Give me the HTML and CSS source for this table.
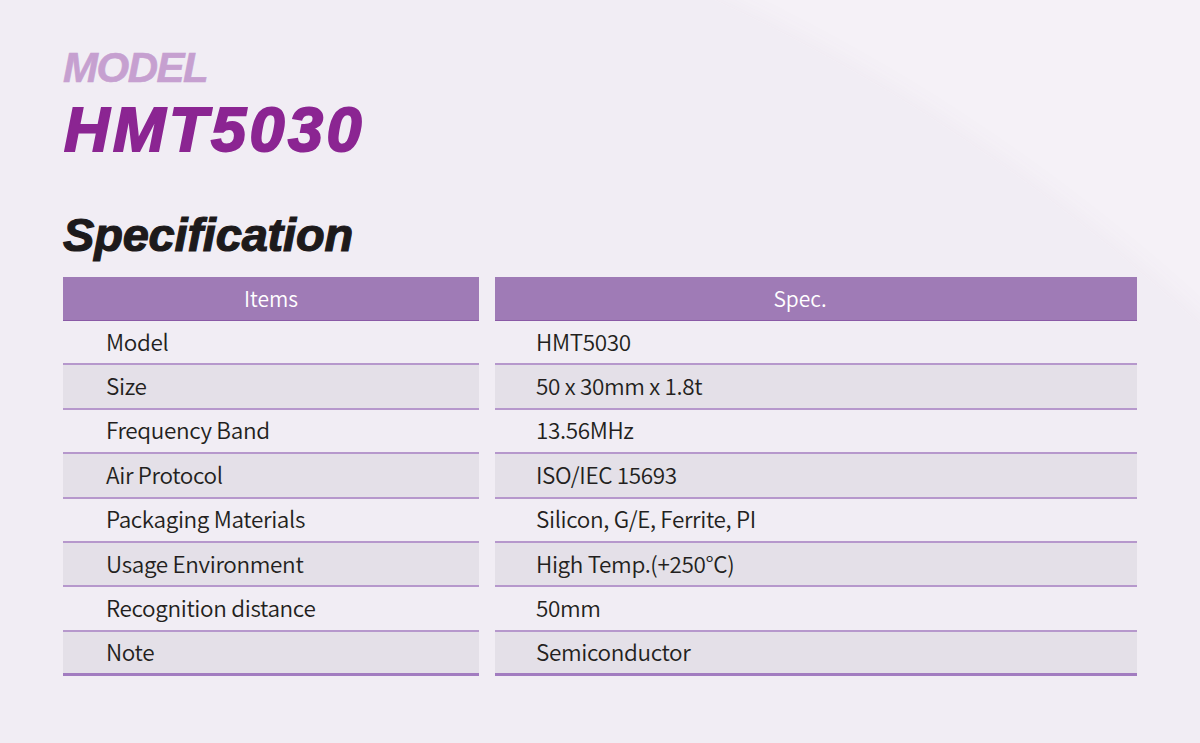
FILE: index.html
```html
<!DOCTYPE html>
<html>
<head>
<meta charset="utf-8">
<link rel="stylesheet" href="styles.css">
</head>
<body>
<div class="page">
  <div class="bg-curve"></div>
  <header class="heading">
    <div class="model-label">MODEL</div>
    <div class="model-name">HMT5030</div>
  </header>
  <h2 class="spec-title">Specification</h2>
  <div class="tables">
    <div class="col col-items">
      <div class="head">Items</div>
      <div class="row">Model</div>
      <div class="row alt">Size</div>
      <div class="row">Frequency Band</div>
      <div class="row alt">Air Protocol</div>
      <div class="row">Packaging Materials</div>
      <div class="row alt">Usage Environment</div>
      <div class="row">Recognition distance</div>
      <div class="row alt last">Note</div>
    </div>
    <div class="col col-spec">
      <div class="head">Spec.</div>
      <div class="row">HMT5030</div>
      <div class="row alt">50 x 30mm x 1.8t</div>
      <div class="row">13.56MHz</div>
      <div class="row alt">ISO/IEC 15693</div>
      <div class="row">Silicon, G/E, Ferrite, PI</div>
      <div class="row alt">High Temp.(+250°C)</div>
      <div class="row">50mm</div>
      <div class="row alt last">Semiconductor</div>
    </div>
  </div>
</div>
</body>
</html>
```

FILE: styles.css
```css
* { box-sizing: border-box; margin: 0; padding: 0; }
html, body { width: 1200px; height: 743px; overflow: hidden; }
body {
  background: #f5f1f7;
  font-family: "Noto Sans CJK KR", "Noto Sans", sans-serif;
}
.page {
  position: relative;
  width: 1200px;
  height: 743px;
  padding: 44px 0 0 63px;
  overflow: hidden;
}
.bg-curve {
  position: absolute;
  left: -1922px;
  top: -171px;
  width: 3716px;
  height: 3716px;
  border-radius: 50%;
  background: radial-gradient(circle at 50% 50%, #f1edf4 95%, #ebe6ef 100%);
  box-shadow: 0 0 30px rgba(120, 100, 140, 0.06);
  z-index: 0;
}
.heading, .spec-title, .tables { position: relative; z-index: 1; }
.heading {
  font-family: "Liberation Sans", Arial, sans-serif;
  font-weight: bold;
  font-style: italic;
}
.model-label {
  font-size: 42px;
  line-height: 48px;
  color: #c6a0d0;
  letter-spacing: -1.5px;
  -webkit-text-stroke: 0.6px #c6a0d0;
}
.model-name {
  margin-top: 4px;
  font-size: 63px;
  line-height: 66px;
  color: #8b2592;
  letter-spacing: 3.5px;
  margin-left: 1px;
  -webkit-text-stroke: 2px #8b2592;
}
.spec-title {
  margin-top: 45px;
  font-family: "Liberation Sans", Arial, sans-serif;
  font-weight: bold;
  font-style: italic;
  font-size: 47px;
  line-height: 56px;
  color: #1d1a1b;
  letter-spacing: -0.2px;
  -webkit-text-stroke: 1.2px #1d1a1b;
}
.tables {
  margin-top: 14px;
  display: flex;
  gap: 16px;
}
.col-items { width: 416px; }
.col-spec { width: 642px; }
.head {
  height: 44px;
  background: #9f7bb6;
  border-bottom: 1px solid #8a5aa6;
  color: #fff;
  font-size: 21px;
  font-weight: 350;
  display: flex;
  align-items: center;
  justify-content: center;
  padding-bottom: 2px;
}
.col-spec .head { padding-right: 32px; }
.row {
  height: 44.4px;
  display: flex;
  align-items: center;
  font-size: 22.5px;
  font-weight: 350;
  letter-spacing: -0.35px;
  color: #231f20;
  border-bottom: 2px solid #b698cc;
  padding-bottom: 3px;
}
.col-items .row { padding-left: 43px; }
.col-spec .row { padding-left: 41px; }
.row.alt { background: #e4e0e8; }
.row.last { border-bottom: 3px solid #a27cc0; }
```
